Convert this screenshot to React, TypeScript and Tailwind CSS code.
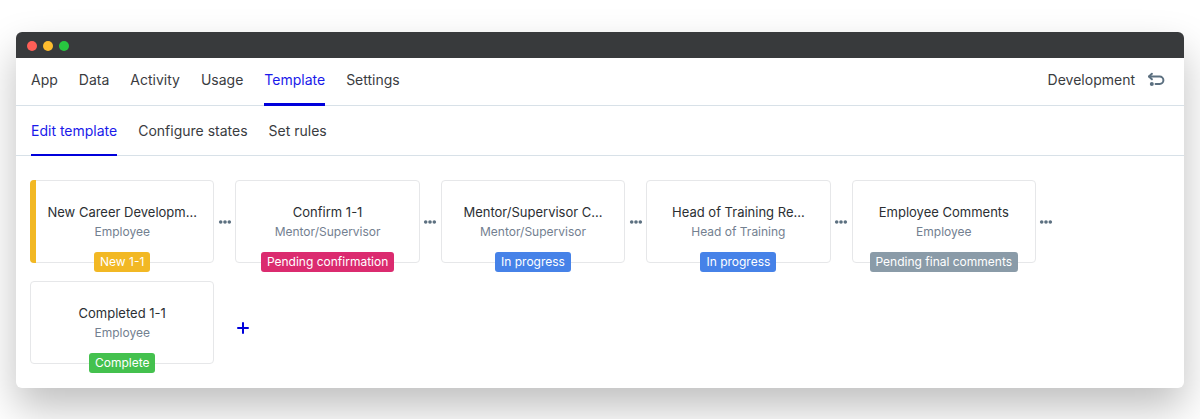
import clsx from "clsx";

type Step = {
  title: string;
  role: string;
  state: string;
  color: string;
  selected?: boolean;
};

const mainTabs = ["App", "Data", "Activity", "Usage", "Template", "Settings"];
const templateTabs = ["Edit template", "Configure states", "Set rules"];

const steps: Step[] = [
  {
    title: "New Career Developm...",
    role: "Employee",
    state: "New 1-1",
    color: "bg-[#f2b824]",
    selected: true,
  },
  {
    title: "Confirm 1-1",
    role: "Mentor/Supervisor",
    state: "Pending confirmation",
    color: "bg-[#db2b6f]",
  },
  {
    title: "Mentor/Supervisor C...",
    role: "Mentor/Supervisor",
    state: "In progress",
    color: "bg-[#4682e8]",
  },
  {
    title: "Head of Training Re...",
    role: "Head of Training",
    state: "In progress",
    color: "bg-[#4682e8]",
  },
  {
    title: "Employee Comments",
    role: "Employee",
    state: "Pending final comments",
    color: "bg-[#8a9ba8]",
  },
  { title: "Completed 1-1", role: "Employee", state: "Complete", color: "bg-[#44c14e]" },
];

function TitleBar() {
  return (
    <div className="flex h-[26px] items-center gap-1.5 rounded-t-md bg-[#383a3c] px-[11px] pt-px">
      <span className="h-2.5 w-2.5 rounded-full bg-[#ff5f57]" />
      <span className="h-2.5 w-2.5 rounded-full bg-[#febc2e]" />
      <span className="h-2.5 w-2.5 rounded-full bg-[#28c840]" />
    </div>
  );
}

function Tab({ label, active, thick }: { label: string; active: boolean; thick?: boolean }) {
  return (
    <a
      href="#"
      aria-current={active ? "page" : undefined}
      className={clsx(
        "-mb-px flex items-center",
        thick ? "border-b-3 pb-0.5" : "border-b-2 pt-0.5",
        active ? "border-[#0000db] text-[#1a1aea]" : "border-transparent",
      )}
    >
      {label}
    </a>
  );
}

function UndoIcon() {
  return (
    <svg viewBox="0 0 18 16" className="h-4 w-[18px]" fill="none" stroke="#5c7080" strokeWidth="2">
      <path d="M2 4.5H12.7a3.6 3.6 0 0 1 0 7.4H8.6" strokeLinecap="round" />
      <path d="M4.9 1.7 2 4.5l2.9 2.8" strokeLinecap="round" strokeLinejoin="round" />
      <circle cx="4.8" cy="12.1" r="2" fill="#5c7080" stroke="none" />
    </svg>
  );
}

function DotsIcon() {
  return (
    <svg viewBox="0 0 14 4" className="h-1 w-3.5" fill="#5c7080">
      <circle cx="2.7" cy="2" r="1.8" />
      <circle cx="7" cy="2" r="1.8" />
      <circle cx="11.3" cy="2" r="1.8" />
    </svg>
  );
}

function StepCard({ step }: { step: Step }) {
  return (
    <div className="relative flex h-[83px] min-w-0 flex-1 flex-col items-center rounded border border-[#e6e7e9] px-3 pt-[21px] text-[13px] leading-5">
      {step.selected && (
        <span className="absolute -inset-y-px -left-px w-1.5 rounded-l bg-[#f2b824]" />
      )}
      <h2 className="whitespace-nowrap text-[#2b2f33]">{step.title}</h2>
      <p className="text-xs leading-5 text-[#738090]">{step.role}</p>
      <span
        className={clsx(
          "absolute -bottom-2.5 rounded-[3px] px-1.5 text-xs leading-5 whitespace-nowrap text-white",
          step.color,
        )}
      >
        {step.state}
      </span>
    </div>
  );
}

export default function App() {
  return (
    <div className="bg-white px-4 py-8 font-['Inter',sans-serif] text-[#3a3c3f]">
      <main className="rounded-md bg-white shadow-[0_20px_40px_rgba(0,0,0,0.25)]">
        <TitleBar />

        <header className="flex h-12 justify-between border-b border-[#d8e1e8] pr-[19px] pl-[15px] text-sm">
          <nav className="flex gap-[21px]">
            {mainTabs.map((label) => (
              <Tab key={label} label={label} active={label === "Template"} thick />
            ))}
          </nav>
          <div className="flex items-center gap-3 pb-1">
            <span>Development</span>
            <button type="button" aria-label="Undo">
              <UndoIcon />
            </button>
          </div>
        </header>

        <nav className="flex h-[50px] gap-[21px] border-b border-[#d8e1e8] px-[15px] text-sm">
          {templateTabs.map((label) => (
            <Tab key={label} label={label} active={label === "Edit template"} />
          ))}
        </nav>

        <ul className="grid max-w-[1055px] grid-cols-2 gap-y-[18px] px-3.5 pt-6 pb-6 md:grid-cols-3 lg:grid-cols-5">
          {steps.map((step, i) => (
            <li key={step.title} className="flex items-center">
              <StepCard step={step} />
              <div className="flex w-[21px] justify-center">
                {i < steps.length - 1 && (
                  <button type="button" aria-label={`Options after ${step.title}`}>
                    <DotsIcon />
                  </button>
                )}
              </div>
            </li>
          ))}
          <li className="flex items-center pt-2.5">
            <button type="button" aria-label="Add step">
              <svg viewBox="0 0 16 16" className="h-4 w-4" stroke="#0000db" strokeWidth="2">
                <path d="M8 3v10M3 8h10" strokeLinecap="round" />
              </svg>
            </button>
          </li>
        </ul>
      </main>
    </div>
  );
}
